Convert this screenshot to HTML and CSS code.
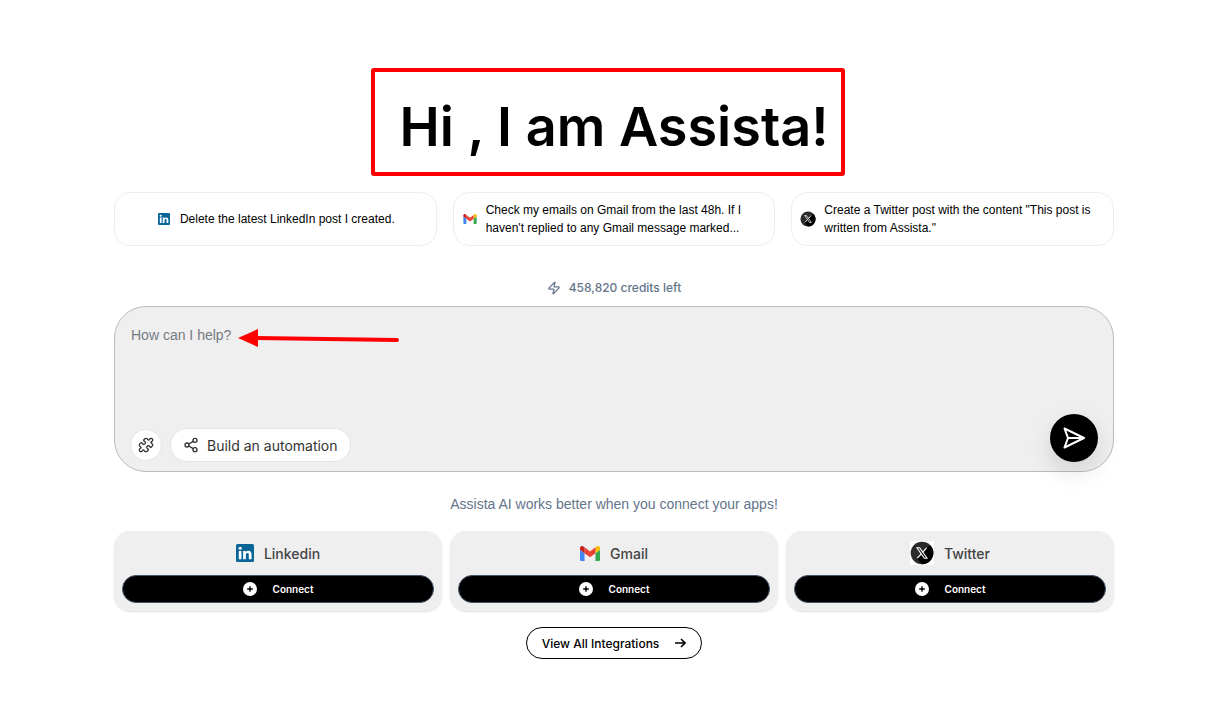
FILE: index.html
```
<!DOCTYPE html>
<html lang="en">
<head>
<meta charset="UTF-8">
<meta name="viewport" content="width=device-width, initial-scale=1">
<title>Assista</title>
<link rel="stylesheet" href="styles.css">
</head>
<body>

<!-- shared icons -->
<svg class="sprite" aria-hidden="true">
	<symbol id="linkedin" viewBox="0 0 24 24">
		<rect x="0" y="0" width="24" height="24" rx="2" fill="#0a6699"/>
		<circle cx="5.5" cy="5.6" r="2.1" fill="#fff"/>
		<path d="M3.7 9.2h3.6v11H3.7zM9.5 9.2h3.4v1.6c.7-1.2 1.9-1.9 3.5-1.9 3.1 0 4.3 1.9 4.3 5v6.3h-3.6v-5.7c0-1.6-.5-2.5-1.8-2.5-1.5 0-2.2 1-2.2 2.6v5.6H9.5z" fill="#fff"/>
	</symbol>
	<symbol id="gmail" viewBox="52 42 88 66">
		<path fill="#4285f4" d="M58 108h14V74L52 59v43c0 3.3 2.7 6 6 6"/>
		<path fill="#34a853" d="M120 108h14c3.3 0 6-2.7 6-6V59l-20 15"/>
		<path fill="#fbbc04" d="M120 48v26l20-15v-8c0-7.4-8.5-11.6-14.4-7.2"/>
		<path fill="#ea4335" d="M72 74V48l24 18 24-18v26L96 92"/>
		<path fill="#c5221f" d="M52 51v8l20 15V48l-5.6-4.2C60.5 39.4 52 43.6 52 51"/>
	</symbol>
	<symbol id="twitter" viewBox="0 0 24 24">
		<circle cx="12" cy="12" r="11.3" fill="#2b2b2b"/>
		<path d="M17.5 6.5L20 4A11.3 11.3 0 0 1 12 23.3L7 17.5z" fill="#000"/>
		<path d="M7 6.8h2.7l7.3 10.4h-2.7z" fill="none" stroke="#fff" stroke-width="1.1"/>
		<path d="M16.6 6.8l-4 4.5M11.3 12.8l-4 4.4" stroke="#fff" stroke-width="1.2"/>
	</symbol>
	<symbol id="plus" viewBox="0 0 14 14">
		<circle cx="7" cy="7" r="7" fill="#fff"/>
		<path d="M7 4.200v5.600M4.200 7h5.600" stroke="#000" stroke-width="1.4"/>
	</symbol>
</svg>

<main class="page">

	<div class="hero">
		<h1 class="title">Hi , I am Assista!<span class="title-frame"></span></h1>
	</div>

	<div class="prompts">
		<button type="button" class="prompt">
			<svg class="prompt-icon small"><use href="#linkedin"/></svg>
			<span>Delete the latest LinkedIn post I created.</span>
		</button>
		<button type="button" class="prompt">
			<svg class="prompt-icon"><use href="#gmail"/></svg>
			<span>Check my emails on Gmail from the last 48h. If I haven't replied to any Gmail message marked...</span>
		</button>
		<button type="button" class="prompt">
			<svg class="prompt-icon large"><use href="#twitter"/></svg>
			<span>Create a Twitter post with the content "This post is written from Assista."</span>
		</button>
	</div>

	<p class="credits">
		<svg class="line-icon" width="14" height="14" viewBox="0 0 24 24"><path d="M4 14a1 1 0 0 1-.78-1.63l9.900-10.200a.5.5 0 0 1 .86.46l-1.920 6.020A1 1 0 0 0 13 10h7a1 1 0 0 1 .78 1.630l-9.900 10.200a.5.5 0 0 1-.86-.46l1.920-6.020A1 1 0 0 0 11 14z"/></svg>
		458,820 credits left
	</p>

	<form class="composer">
		<textarea class="composer-text" aria-label="Message" placeholder="How can I help?"></textarea>
		<svg class="arrow" width="162" height="18" viewBox="0 0 162 18" aria-hidden="true">
			<path d="M18 9L159 11" stroke="#f00" stroke-width="4" stroke-linecap="round"/>
			<path d="M0 9L20 0V18z" fill="#f00"/>
		</svg>
		<div class="composer-bar">
			<button type="button" class="tool round" aria-label="Integrations">
				<svg class="line-icon" width="16" height="16" viewBox="0 0 24 24"><path d="M19.439 7.850c-.049.322.059.648.289.878l1.568 1.568c.47.470.706 1.087.706 1.704s-.235 1.233-.706 1.704l-1.611 1.611a.98.98 0 0 1-.837.276c-.470-.070-.802-.480-.968-.925a2.501 2.501 0 1 0-3.214 3.214c.446.166.855.497.925.968a.979.979 0 0 1-.276.837l-1.610 1.610a2.404 2.404 0 0 1-1.705.707 2.402 2.402 0 0 1-1.704-.706l-1.568-1.568a1.026 1.026 0 0 0-.877-.290c-.493.074-.840.504-1.020.968a2.500 2.500 0 1 1-3.237-3.237c.464-.180.894-.527.967-1.020a1.026 1.026 0 0 0-.289-.877l-1.568-1.568A2.402 2.402 0 0 1 1.998 12c0-.617.236-1.234.706-1.704L4.230 8.770c.240-.240.581-.353.917-.303.515.077.877.528 1.073 1.010a2.500 2.500 0 1 0 3.259-3.259c-.482-.196-.933-.558-1.010-1.073-.050-.336.062-.676.303-.917l1.525-1.525A2.402 2.402 0 0 1 12 1.998c.617 0 1.234.236 1.704.706l1.568 1.568c.230.230.556.338.877.290.493-.074.840-.504 1.020-.968a2.500 2.500 0 1 1 3.237 3.237c-.464.180-.894.527-.967 1.020Z"/></svg>
			</button>
			<button type="button" class="tool">
				<svg class="line-icon" width="16" height="16" viewBox="0 0 24 24"><circle cx="18" cy="5" r="3"/><circle cx="6" cy="12" r="3"/><circle cx="18" cy="19" r="3"/><path d="M8.600 13.500l6.800 4M15.400 6.500l-6.800 4"/></svg>
				Build an automation
			</button>
			<button type="submit" class="send" aria-label="Send">
				<svg width="24" height="24" viewBox="0 0 24 24" fill="none" stroke="#fff" stroke-width="2" stroke-linejoin="round"><path d="M2.500 2.500L22 12 2.500 21.500 6 12zM6 12h16"/></svg>
			</button>
		</div>
	</form>

	<p class="hint">Assista AI works better when you connect your apps!</p>

	<div class="apps">
		<section class="app">
			<h2 class="app-name"><svg class="linkedin"><use href="#linkedin"/></svg>Linkedin</h2>
			<button type="button" class="connect"><svg width="14" height="14"><use href="#plus"/></svg>Connect</button>
		</section>
		<section class="app">
			<h2 class="app-name"><svg class="gmail"><use href="#gmail"/></svg>Gmail</h2>
			<button type="button" class="connect"><svg width="14" height="14"><use href="#plus"/></svg>Connect</button>
		</section>
		<section class="app">
			<h2 class="app-name"><svg class="twitter"><use href="#twitter"/></svg>Twitter</h2>
			<button type="button" class="connect"><svg width="14" height="14"><use href="#plus"/></svg>Connect</button>
		</section>
	</div>

	<a href="#" class="view-all">View All Integrations
		<svg width="11" height="10" viewBox="0 0 11 10" fill="none" stroke="#000" stroke-width="1.6"><path d="M0 5h10M6 1l4 4-4 4"/></svg>
	</a>

</main>

</body>
</html>
```
FILE: styles.css
```
* { box-sizing: border-box; }

body
{
	margin: 0;
	padding: 95px 16px 16px 21px;
	background-color: #fff;
	color: #000;
	font-family: Inter, "Liberation Sans", sans-serif;
}

button, textarea { font-family: inherit; }
button { cursor: pointer; }
h1, h2, p { margin: 0; }
svg { flex-shrink: 0; }

.sprite { display: none; }

.page
{
	max-width: 1000px;
	margin: 0 auto;
	display: flex;
	flex-direction: column;
}

.hero { text-align: center; margin-bottom: 33px; }
.title
{
	display: inline-block;
	vertical-align: top;
	position: relative;
	font-size: 54px;
	line-height: 64px;
	font-weight: 600;
}
.title-frame
{
	position: absolute;
	top: -27px;
	bottom: -17px;
	left: -28px;
	right: -16px;
	border: 4px solid #f00;
	border-radius: 3px;
}

.prompts
{
	display: grid;
	grid-template-columns: repeat(3, 1fr);
	gap: 16px;
}
.prompt
{
	display: flex;
	align-items: center;
	justify-content: center;
	gap: 8px;
	min-height: 54px;
	padding: 8px;
	border: 1px solid #eee;
	border-radius: 16px;
	background-color: #fff;
	color: #000;
	font-size: 12px;
	line-height: 18px;
	text-align: left;
}
.prompt, .composer-text, .hint { font-family: "Liberation Sans", Arial, sans-serif; }
.prompt-icon { width: 16px; height: 10px; }
.prompt-icon.small { height: 12px; }
.prompt-icon.large { height: 16px; }

.line-icon
{
	fill: none;
	stroke: currentColor;
	stroke-width: 2;
	stroke-linecap: round;
	stroke-linejoin: round;
}

.credits
{
	display: flex;
	align-items: center;
	justify-content: center;
	gap: 8px;
	margin: 32px 0 8px;
	color: #64748b;
	font-size: 12px;
	line-height: 20px;
	font-weight: 500;
}

.composer
{
	position: relative;
	padding: 16px 15px 9px;
	border: 1px solid #bbb;
	border-radius: 32px;
	background-color: #efefef;
}
.composer-text
{
	display: block;
	width: 100%;
	height: 91px;
	padding: 2px 1px;
	border: 0;
	outline: 0;
	resize: none;
	background: none;
	font-size: 14px;
	line-height: 20px;
}
.composer-text::placeholder { color: #757b84; }
.arrow
{
	position: absolute;
	top: 22px;
	left: 123px;
}
.composer-bar
{
	display: flex;
	align-items: center;
	gap: 8px;
}
.tool
{
	display: flex;
	align-items: center;
	gap: 8px;
	height: 34px;
	margin-top: 14px;
	padding: 0 12px;
	border: 1px solid #e5e5e5;
	border-radius: 17px;
	background-color: #fff;
	color: #333;
	font-size: 14px;
}
.tool.round
{
	width: 32px;
	height: 32px;
	padding: 0;
	justify-content: center;
}
.send
{
	display: flex;
	align-items: center;
	justify-content: center;
	width: 48px;
	height: 48px;
	margin-left: auto;
	padding: 0;
	border: 0;
	border-radius: 50%;
	background-color: #000;
	box-shadow: 0 10px 24px rgba(0, 0, 0, 0.12);
}

.hint
{
	margin: 22px 0 17px;
	color: #64748b;
	font-size: 14px;
	line-height: 20px;
	text-align: center;
}

.apps
{
	display: grid;
	grid-template-columns: repeat(3, 1fr);
	gap: 8px;
}
.app
{
	padding: 8px;
	border-radius: 16px;
	background-color: #efefef;
	box-shadow: 0 1px 2px rgba(0, 0, 0, 0.12);
}
.app-name
{
	display: flex;
	align-items: center;
	justify-content: center;
	gap: 10px;
	height: 28px;
	margin-bottom: 8px;
	color: #444;
	font-size: 14px;
	font-weight: 500;
}
.linkedin { width: 18px; height: 18px; }
.gmail { width: 20px; height: 15px; }
.twitter { width: 24px; height: 24px; background-color: #fff; }
.connect
{
	display: flex;
	align-items: center;
	justify-content: center;
	gap: 16px;
	width: 100%;
	height: 28px;
	border: 1px solid #475569;
	border-radius: 14px;
	background-color: #000;
	color: #fff;
	font-size: 10px;
	font-weight: 600;
}

.view-all
{
	display: flex;
	align-items: center;
	align-self: center;
	gap: 16px;
	height: 32px;
	margin-top: 16px;
	padding: 0 15px;
	border: 1px solid #000;
	border-radius: 16px;
	color: #000;
	font-size: 12px;
	font-weight: 500;
	text-decoration: none;
}
```
